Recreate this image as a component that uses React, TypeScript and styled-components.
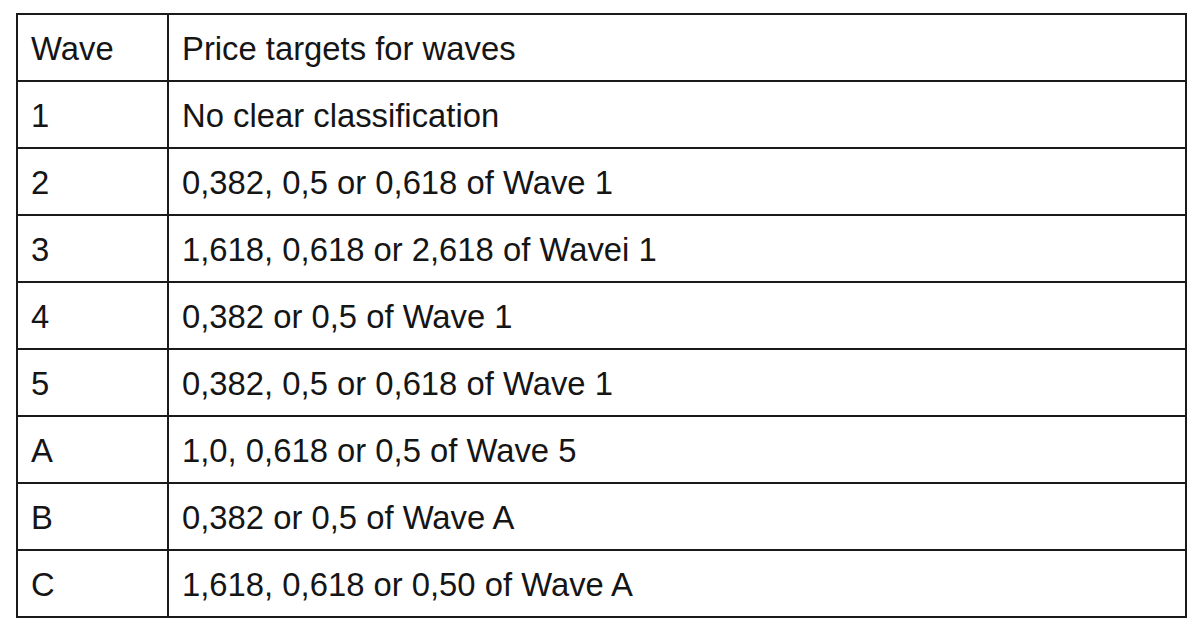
import React from 'react';
import styled, { createGlobalStyle } from 'styled-components';

const GlobalStyle = createGlobalStyle`
  html, body {
    margin: 0;
    padding: 0;
    background: #ffffff;
  }
  body {
    font-family: "Liberation Sans", Arial, sans-serif;
  }
`;

const Page = styled.div`
  width: 1200px;
  height: 630px;
  padding: 13px 0 0 16px;
  box-sizing: border-box;
  background: #ffffff;
`;

const Table = styled.table`
  width: 1171px;
  border-collapse: collapse;
  table-layout: fixed;
  border: 2px solid #1a1a1a;
`;

const Cell = styled.td<{ $narrow?: boolean }>`
  height: 67px;
  padding: 3px 0 0 13px;
  box-sizing: border-box;
  border: 2px solid #1a1a1a;
  width: ${props => (props.$narrow ? '151px' : 'auto')};
  font-size: 32.8px;
  color: #151515;
  vertical-align: middle;
  white-space: nowrap;
  line-height: 1;
`;

const rows: [string, string][] = [
  ['Wave', 'Price targets for waves'],
  ['1', 'No clear classification'],
  ['2', '0,382, 0,5 or 0,618 of Wave 1'],
  ['3', '1,618, 0,618 or 2,618 of Wavei 1'],
  ['4', '0,382 or 0,5 of Wave 1'],
  ['5', '0,382, 0,5 or 0,618 of Wave 1'],
  ['A', '1,0, 0,618 or 0,5 of Wave 5'],
  ['B', '0,382 or 0,5 of Wave A'],
  ['C', '1,618, 0,618 or 0,50 of Wave A'],
];

export default function App() {
  return (
    <Page>
      <GlobalStyle />
      <Table>
        <tbody>
          {rows.map(([wave, target]) => (
            <tr key={wave}>
              <Cell $narrow>{wave}</Cell>
              <Cell>{target}</Cell>
            </tr>
          ))}
        </tbody>
      </Table>
    </Page>
  );
}
